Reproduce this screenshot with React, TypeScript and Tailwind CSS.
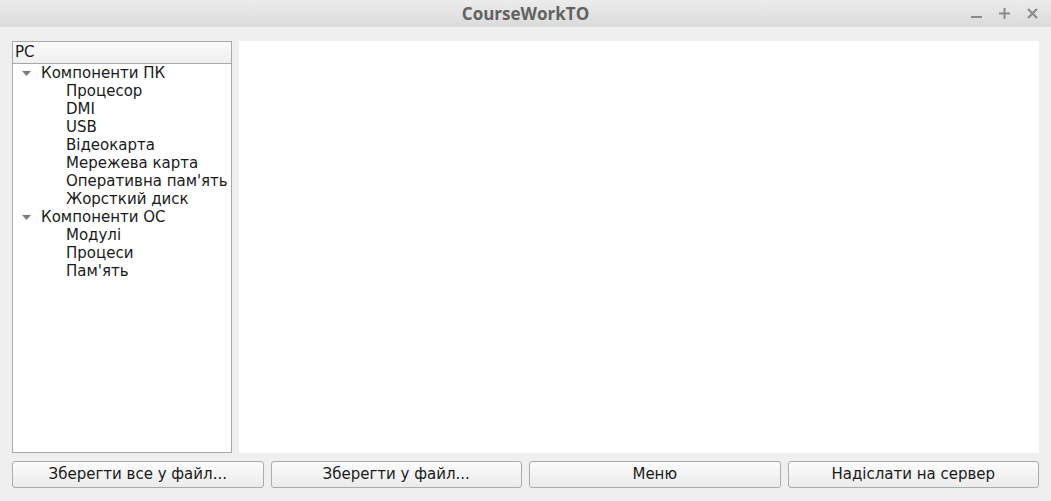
import React from 'react'

const pcItems = ['Процесор', 'DMI', 'USB', 'Відеокарта', 'Мережева карта', "Оперативна пам'ять", 'Жорсткий диск']
const osItems = ['Модулі', 'Процеси', "Пам'ять"]

function Arrow() {
  return (
    <svg width="9" height="5" viewBox="0 0 9 5" className="mr-[10px] ml-[9px]">
      <path d="M0 0 L9 0 L4.5 5 Z" fill="#7a7a7a" />
    </svg>
  )
}

function Group({ title, items }: { title: string; items: string[] }) {
  return (
    <div>
      <div className="flex items-center h-[18px]">
        <Arrow />
        <span>{title}</span>
      </div>
      {items.map((it) => (
        <div key={it} className="h-[18px] flex items-center pl-[53px] whitespace-nowrap">
          {it}
        </div>
      ))}
    </div>
  )
}

export default function App() {
  const buttons = ['Зберегти все у файл...', 'Зберегти у файл...', 'Меню', 'Надіслати на сервер']

  return (
    <div
      className="w-[1051px] h-[501px] bg-[#efefef] flex flex-col overflow-hidden text-[#1a1a1a]"
      style={{ fontFamily: '"DejaVu Sans", sans-serif' }}
    >
      {/* Title bar */}
      <div className="h-[27px] bg-gradient-to-b from-[#ececec] to-[#dadada] flex items-center justify-center relative">
        <span className="font-bold text-[17px] text-[#626262]" style={{ fontFamily: '"Open Sans", sans-serif' }}>
          CourseWorkTO
        </span>
        <div className="absolute right-[13px] top-0 h-full flex items-center gap-[17px]">
          <svg width="11" height="11" viewBox="0 0 11 11">
            <rect x="0" y="8" width="11" height="2" fill="#8a8a8a" />
          </svg>
          <svg width="11" height="11" viewBox="0 0 11 11">
            <rect x="0" y="4.5" width="11" height="2" fill="#8a8a8a" />
            <rect x="4.5" y="0" width="2" height="11" fill="#8a8a8a" />
          </svg>
          <svg width="11" height="11" viewBox="0 0 11 11">
            <path d="M1 1 L10 10 M10 1 L1 10" stroke="#8a8a8a" strokeWidth="2.2" />
          </svg>
        </div>
      </div>

      {/* Body */}
      <div className="flex-1 flex flex-col px-[12px] pt-[14px] pb-[13px]">
        <div className="flex gap-[7px] h-[412px]">
          <div className="w-[220px] border border-[#a8a8a8] bg-white flex flex-col text-[15px]">
            <div className="h-[22px] border-b border-[#a8a8a8] bg-gradient-to-b from-[#fbfbfb] to-[#efefef] flex items-center pl-[2px]">
              PC
            </div>
            <Group title="Компоненти ПК" items={pcItems} />
            <Group title="Компоненти ОС" items={osItems} />
          </div>
          <div className="flex-1 bg-white" />
        </div>

        <div className="grid grid-cols-4 gap-[7px] mt-[8px]">
          {buttons.map((b) => (
            <button
              key={b}
              className="h-[27px] rounded-[3px] border border-[#ababab] bg-gradient-to-b from-[#fcfcfc] to-[#ebebeb] text-[15px] text-[#1a1a1a]"
            >
              {b}
            </button>
          ))}
        </div>
      </div>
    </div>
  )
}
